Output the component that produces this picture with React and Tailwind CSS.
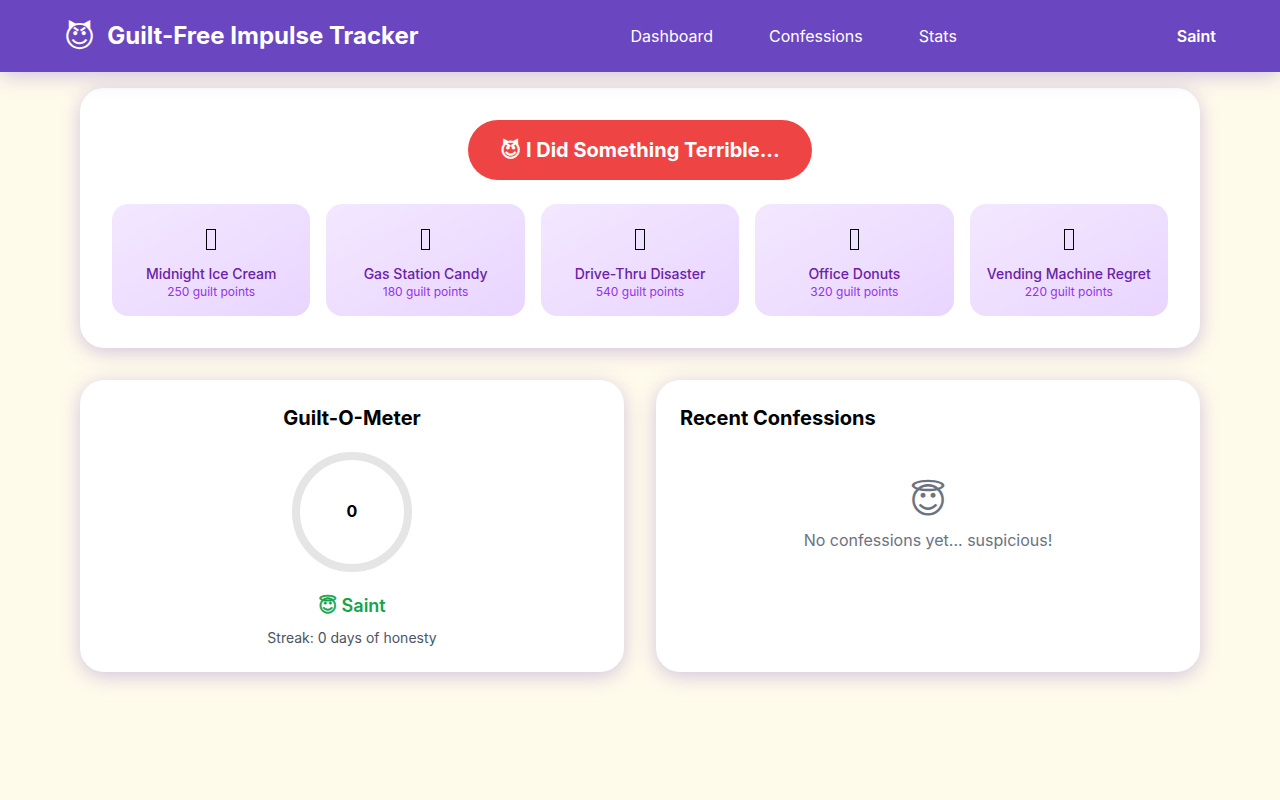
const quickLogs = [
  { name: "Midnight Ice Cream", points: 250 },
  { name: "Gas Station Candy", points: 180 },
  { name: "Drive-Thru Disaster", points: 540 },
  { name: "Office Donuts", points: 320 },
  { name: "Vending Machine Regret", points: 220 },
]

const emojiFont = "font-['Inter','DejaVu_Sans',sans-serif]"
const boldEmoji = "[-webkit-text-stroke:0.6px_currentColor]"
const cardShadow = "shadow-[0_4px_20px_rgba(107,70,193,0.3)]"

export default function App() {
  return (
    <div className="min-h-screen bg-[#fffbeb] font-['Inter',sans-serif] text-black">
      <header className="relative z-10 flex items-center justify-between bg-[#6b46c1] px-16 py-5 text-white shadow-[0_4px_20px_rgba(107,70,193,0.3)]">
        <div className="flex items-center gap-3">
          <span className={`${emojiFont} text-3xl leading-8`}>{"\u{1F608}\uFE0E"}</span>
          <h1 className="text-2xl font-bold">Guilt-Free Impulse Tracker</h1>
        </div>
        <nav className="flex gap-14">
          <a href="#">Dashboard</a>
          <a href="#">Confessions</a>
          <a href="#">Stats</a>
        </nav>
        <span className="ml-2 font-semibold">Saint</span>
      </header>

      <main className="mx-auto flex max-w-[1120px] flex-col gap-8 pt-4">
        <section className={`rounded-3xl bg-white p-8 ${cardShadow}`}>
          <div className="flex justify-center">
            <button className={`${emojiFont} h-[60px] rounded-full bg-[#ef4444] px-8 text-xl font-bold text-white`}>
              <span className={boldEmoji}>{"\u{1F608}\uFE0E"}</span> I Did Something Terrible...
            </button>
          </div>
          <div className="mt-6 grid grid-cols-5 gap-4">
            {quickLogs.map((item) => (
              <div key={item.name} className="flex h-28 flex-col items-center rounded-2xl bg-gradient-to-br from-[#f3e8ff] to-[#e9d5ff] pt-4 text-center">
                <span className="mb-2 flex h-9 items-center pt-0.5">
                  <span className="h-[21px] w-[9.6px] border border-black" />
                </span>
                <span className="text-sm font-medium text-[#6b21a8]">{item.name}</span>
                <span className="text-xs text-[#9333ea]">{item.points} guilt points</span>
              </div>
            ))}
          </div>
        </section>

        <div className="grid grid-cols-2 gap-8">
          <section className={`flex h-[292px] flex-col items-center rounded-3xl bg-white p-6 ${cardShadow}`}>
            <h2 className="mb-5 text-xl font-bold">Guilt-O-Meter</h2>
            <div className="flex h-[120px] w-[120px] items-center justify-center rounded-full border-8 border-[#e5e5e5] pb-0.5 text-base font-bold">0</div>
            <div className={`${emojiFont} mt-5 text-lg font-semibold text-[#16a34a]`}>
              <span className={boldEmoji}>{"\u{1F607}\uFE0E"}</span> Saint
            </div>
            <p className="mt-2 text-sm text-[#4b5563]">Streak: 0 days of honesty</p>
          </section>

          <section className={`h-[292px] rounded-3xl bg-white p-6 ${cardShadow}`}>
            <h2 className="text-xl font-bold">Recent Confessions</h2>
            <div className="flex flex-col items-center pt-12 text-[#6b7280]">
              <span className={`${emojiFont} text-4xl leading-10`}>{"\u{1F607}\uFE0E"}</span>
              <p className="mt-2">No confessions yet... suspicious!</p>
            </div>
          </section>
        </div>
      </main>
    </div>
  )
}
